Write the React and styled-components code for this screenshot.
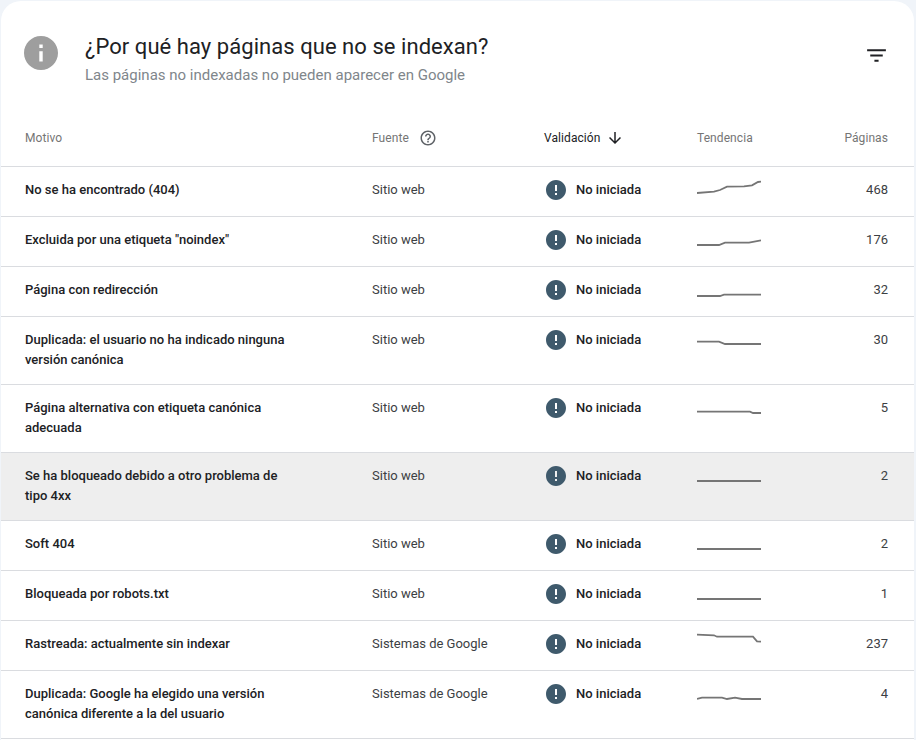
import React from 'react';
import styled, { createGlobalStyle } from 'styled-components';

const rows = [
  { reason: 'No se ha encontrado (404)', source: 'Sitio web', pages: 468, trend: '0,12 17,10.7 23,9 30,5.7 47,5.3 55,4.3 61,1 64,0.7' },
  { reason: 'Excluida por una etiqueta "noindex"', source: 'Sitio web', pages: 176, trend: '0,14 22,14 28,11.7 52,11.7 64,9.3' },
  { reason: 'Página con redirección', source: 'Sitio web', pages: 32, trend: '0,15 23,15 27,13.7 64,13.7' },
  { reason: 'Duplicada: el usuario no ha indicado ninguna versión canónica', source: 'Sitio web', pages: 30, trend: '0,10.7 22,10.7 28,13 64,13' },
  { reason: 'Página alternativa con etiqueta canónica adecuada', source: 'Sitio web', pages: 5, trend: '0,12.7 53,12.7 56,14 64,14' },
  { reason: 'Se ha bloqueado debido a otro problema de tipo 4xx', source: 'Sitio web', pages: 2, trend: '0,14 64,14', active: true },
  { reason: 'Soft 404', source: 'Sitio web', pages: 2, trend: '0,14 64,14' },
  { reason: 'Bloqueada por robots.txt', source: 'Sitio web', pages: 1, trend: '0,14 64,14' },
  { reason: 'Rastreada: actualmente sin indexar', source: 'Sistemas de Google', pages: 237, trend: '0,-0.3 17,0.3 20,1.7 56,1.7 60,6.3 64,6.7' },
  { reason: 'Duplicada: Google ha elegido una versión canónica diferente a la del usuario', source: 'Sistemas de Google', pages: 4, trend: '0,14 5,12.7 25,12.7 30,14 38,12.7 45,14 64,14' },
];

const GlobalStyle = createGlobalStyle`
  html, body {
    margin: 0;
    background: #f0f4f9;
  }
`;

const Card = styled.main`
  box-sizing: border-box;
  width: 913px;
  height: 739px;
  margin: 1px 0 0 1px;
  overflow: hidden;
  background: #fff;
  border-radius: 20px 20px 0 0;
  font-family: Roboto, "Liberation Sans", sans-serif;
  color: #1f1f1f;
`;

const Header = styled.header`
  display: flex;
  align-items: flex-start;
  height: 114px;
  padding: 32px 26px 0 23px;
  box-sizing: border-box;
`;

const InfoIcon = styled.svg`
  width: 34px;
  height: 34px;
  margin-top: 3px;
  fill: #9e9e9e;
  flex: none;
`;

const Heading = styled.div`
  margin-left: 27px;
  flex: 1;
`;

const Title = styled.h1`
  margin: 0;
  font-size: 22px;
  line-height: 28px;
  font-weight: 400;
  letter-spacing: 0.05px;
  color: #202124;
`;

const Subtitle = styled.p`
  margin: 4px 0 0;
  font-size: 15px;
  line-height: 20px;
  color: #80868b;
`;

const FilterIcon = styled.svg`
  width: 25px;
  height: 25px;
  margin: 9.5px -1px 0 0;
  fill: #202124;
  flex: none;
`;

const Row = styled.div`
  box-sizing: border-box;
  display: grid;
  grid-template-columns: 347px 172px 153px 1fr;
  min-height: ${(p) => (p.$head ? 52 : 50)}px;
  padding: 13px 26px 14px 24px;
  border-bottom: 1px solid #dadce0;
  background: ${(p) => (p.$active ? '#eeeeee' : 'transparent')};
  font-size: 13px;
  line-height: 20px;
`;

const HeadCell = styled.div`
  display: flex;
  align-items: center;
  height: 20px;
  gap: ${(p) => p.$gap || 0}px;
  font-size: 12px;
  letter-spacing: 0.08px;
  color: ${(p) => (p.$sorted ? '#202124' : '#757575')};
`;

const HeadIcon = styled.svg`
  width: 18px;
  height: 18px;
  fill: ${(p) => p.$color};
`;

const Reason = styled.div`
  max-width: 268px;
  font-weight: 500;
  color: #202124;
`;

const Source = styled.div`
  color: #3c4043;
`;

const Status = styled.div`
  display: flex;
  align-items: flex-start;
  gap: 8px;
  font-weight: 500;
  color: #202124;
`;

const StatusIcon = styled.svg`
  width: 24px;
  height: 24px;
  margin: -2px 0 -2px 0;
  fill: #3f5a6c;
  flex: none;
`;

const Spark = styled.svg`
  display: block;
  width: 64px;
  height: 24px;
  margin: -3px 0 -1px;
  fill: none;
  stroke: #757575;
  stroke-width: 1.8;
`;

const TrendWrap = styled.div`
  display: flex;
  align-items: flex-start;
  justify-content: space-between;
`;

const Pages = styled.div`
  color: #3c4043;
`;

export default function App() {
  return (
    <>
      <GlobalStyle />
      <Card>
        <Header>
          <InfoIcon viewBox="2 2 20 20">
            <path d="M12 2C6.48 2 2 6.48 2 12s4.48 10 10 10 10-4.48 10-10S17.52 2 12 2zm1 15h-2v-6h2v6zm0-8h-2V7h2v2z" />
          </InfoIcon>
          <Heading>
            <Title>¿Por qué hay páginas que no se indexan?</Title>
            <Subtitle>Las páginas no indexadas no pueden aparecer en Google</Subtitle>
          </Heading>
          <FilterIcon viewBox="0 0 24 24">
            <path d="M10 18h4v-2h-4v2zM3 6v2h18V6H3zm3 7h12v-2H6v2z" />
          </FilterIcon>
        </Header>
        <Row $head>
          <HeadCell>Motivo</HeadCell>
          <HeadCell $gap={10}>
            Fuente
            <HeadIcon viewBox="0 0 24 24" $color="#5f6368">
              <path d="M11 18h2v-2h-2v2zm1-16C6.48 2 2 6.48 2 12s4.48 10 10 10 10-4.48 10-10S17.52 2 12 2zm0 18c-4.41 0-8-3.59-8-8s3.59-8 8-8 8 3.59 8 8-3.59 8-8 8zm0-14c-2.21 0-4 1.79-4 4h2c0-1.1.9-2 2-2s2 .9 2 2c0 2-3 1.75-3 5h2c0-2.25 3-2.5 3-5 0-2.21-1.79-4-4-4z" />
            </HeadIcon>
          </HeadCell>
          <HeadCell $sorted $gap={5}>
            Validación
            <HeadIcon viewBox="0 0 24 24" $color="#202124">
              <path d="M20 12l-1.41-1.41L13 16.17V4h-2v12.17l-5.58-5.59L4 12l8 8 8-8z" />
            </HeadIcon>
          </HeadCell>
          <TrendWrap>
            <HeadCell>Tendencia</HeadCell>
            <HeadCell>Páginas</HeadCell>
          </TrendWrap>
        </Row>
        {rows.map((row) => (
          <Row key={row.reason} $active={row.active}>
            <Reason>{row.reason}</Reason>
            <Source>{row.source}</Source>
            <Status>
              <StatusIcon viewBox="0 0 24 24">
                <path d="M12 2C6.48 2 2 6.48 2 12s4.48 10 10 10 10-4.48 10-10S17.52 2 12 2zm1 15h-2v-2h2v2zm0-4h-2V7h2v6z" />
              </StatusIcon>
              No iniciada
            </Status>
            <TrendWrap>
              <Spark viewBox="0 -4 64 24">
                <polyline points={row.trend} />
              </Spark>
              <Pages>{row.pages}</Pages>
            </TrendWrap>
          </Row>
        ))}
      </Card>
    </>
  );
}
